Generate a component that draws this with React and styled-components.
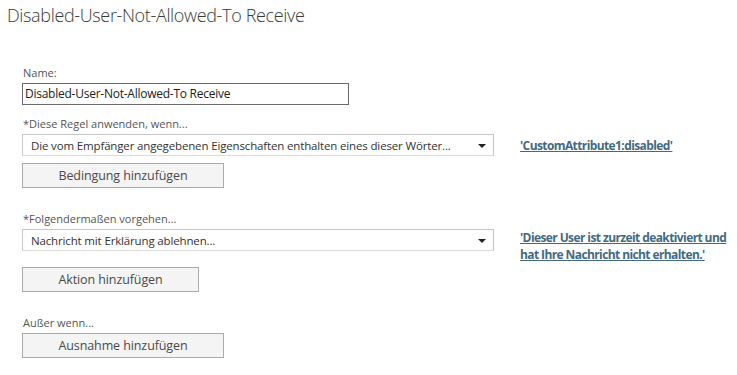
import React from "react";
import styled, { createGlobalStyle } from "styled-components";

const Global = createGlobalStyle`
  html, body { margin: 0; padding: 0; background: #fff; }
  body { font-family: "Open Sans", "Noto Sans", sans-serif; color: #333; }
`;

const Page = styled.div`
  width: 737px;
  height: 375px;
  overflow: hidden;
  padding: 2px 0 0 7px;
  box-sizing: border-box;
`;

const Title = styled.h1`
  margin: 0;
  font-weight: 300;
  font-size: 18px;
  line-height: 26px;
  color: #3a3a3a;
  letter-spacing: -0.35px;
`;

const Form = styled.div`
  display: flex;
  flex-direction: column;
  padding: 37px 0 0 15px;
`;

const Label = styled.div`
  font-size: 11px;
  line-height: 15px;
  color: #555;
  margin-top: ${(p) => p.$top || 0}px;
  margin-bottom: 3px;
  padding-left: 1px;
`;

const TextInput = styled.div`
  width: 327px;
  height: 22px;
  box-sizing: border-box;
  border: 1px solid #6a6a6a;
  padding: 0 2px;
  font-size: 12px;
  letter-spacing: -0.25px;
  line-height: 20px;
  color: #222;
  white-space: nowrap;
`;

const Row = styled.div`
  display: grid;
  grid-template-columns: 472px 1fr;
  column-gap: 26px;
  align-items: start;
`;

const Column = styled.div`
  display: flex;
  flex-direction: column;
  align-items: flex-start;
`;

const Select = styled.div`
  align-self: stretch;
  height: 22px;
  box-sizing: border-box;
  border: 1px solid #c8c8c8;
  border-bottom-color: #dcdcdc;
  display: flex;
  align-items: center;
  justify-content: space-between;
  padding: 0 7px 0 8px;
  font-size: 11.5px;
  letter-spacing: -0.15px;
  color: #333;
  white-space: nowrap;
`;

const Arrow = styled.span`
  width: 0;
  height: 0;
  border-left: 4px solid transparent;
  border-right: 4px solid transparent;
  border-top: 4px solid #222;
  margin-top: 1px;
`;

const Link = styled.a`
  font-size: 12px;
  font-weight: 700;
  line-height: 17px;
  color: #426a84;
  text-decoration: underline;
  margin-top: ${(p) => p.$top || 0}px;
  letter-spacing: -0.6px;
  cursor: pointer;
`;

const Button = styled.button`
  width: ${(p) => p.$w}px;
  height: 25px;
  margin-top: ${(p) => p.$top || 0}px;
  box-sizing: border-box;
  border: 1px solid #ababab;
  background: #f4f4f4;
  font-family: inherit;
  font-size: 12.5px;
  letter-spacing: -0.1px;
  color: #4a4a4a;
  padding: 0;
  cursor: pointer;
`;

export default function App() {
  return (
    <>
      <Global />
      <Page>
        <Title>Disabled-User-Not-Allowed-To Receive</Title>
        <Form>
          <Label>Name:</Label>
          <TextInput>Disabled-User-Not-Allowed-To Receive</TextInput>

          <Label $top={11}>*Diese Regel anwenden, wenn...</Label>
          <Row>
            <Column>
              <Select>
                <span>Die vom Empfänger angegebenen Eigenschaften enthalten eines dieser Wörter...</span>
                <Arrow />
              </Select>
              <Button $w={202} $top={7}>Bedingung hinzufügen</Button>
            </Column>
            <Link $top={3}>'CustomAttribute1:disabled'</Link>
          </Row>

          <Label $top={23}>*Folgendermaßen vorgehen...</Label>
          <Row>
            <Column>
              <Select>
                <span>Nachricht mit Erklärung ablehnen...</span>
                <Arrow />
              </Select>
              <Button $w={177} $top={16}>Aktion hinzufügen</Button>
            </Column>
            <Link $top={0}>
              'Dieser User ist zurzeit deaktiviert und
              <br />
              hat Ihre Nachricht nicht erhalten.'
            </Link>
          </Row>

          <Label $top={23}>Außer wenn...</Label>
          <Column>
            <Button $w={202}>Ausnahme hinzufügen</Button>
          </Column>
        </Form>
      </Page>
    </>
  );
}
